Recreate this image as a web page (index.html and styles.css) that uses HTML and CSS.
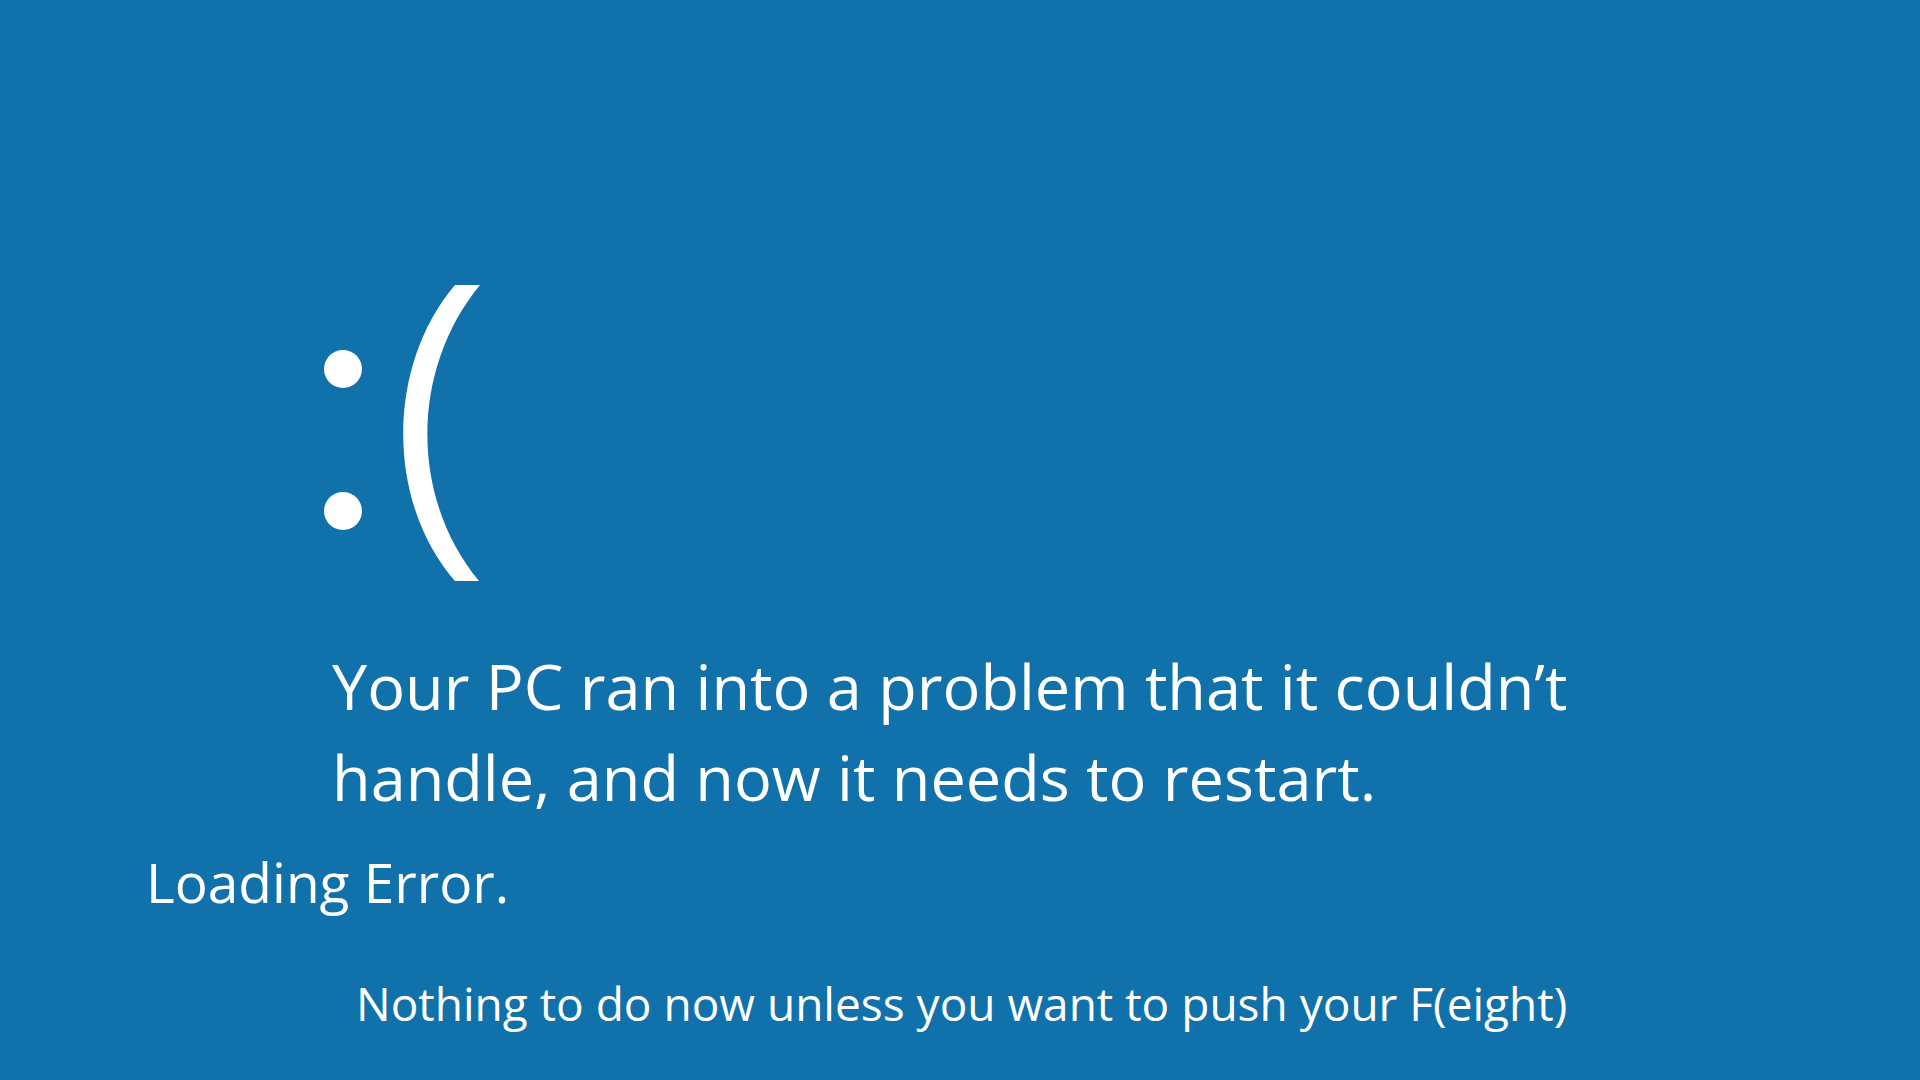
FILE: index.html
```html
<!DOCTYPE html>
<html lang="en">
<head>
<meta charset="utf-8">
<meta name="viewport" content="width=device-width, initial-scale=1">
<title>Loading Error</title>
<link rel="stylesheet" href="styles.css">
</head>
<body>
<main class="screen">
  <div class="face" role="img" aria-label="Sad face">
    <svg class="face-icon" viewBox="0 0 156 296" width="156" height="296">
      <circle cx="19" cy="84" r="19"/>
      <circle cx="19" cy="226" r="19"/>
      <path d="M131 0H156C86 85 86 213 155 296H131C62 217 62 81 131 0Z"/>
    </svg>
  </div>
  <h1 class="message">Your PC ran into a problem that it couldn’t<br>handle, and now it needs to restart.</h1>
  <p class="status">Loading Error.</p>
  <p class="hint">Nothing to do now unless you want to push your F(eight)</p>
</main>
</body>
</html>
```

FILE: styles.css
```css
body {
  margin: 0;
  background: #1171aa;
  color: #fff;
  font-family: "Open Sans", "Noto Sans", sans-serif;
}

.screen {
  display: flex;
  flex-direction: column;
  box-sizing: border-box;
  min-height: 100vh;
  padding: 285px 146px 0;
}

.face {
  padding-left: 178px;
}

.face-icon {
  display: block;
  fill: #fff;
}

.message {
  margin: 59px 0 0;
  padding-left: 186px;
  font-size: 63px;
  line-height: 91px;
  font-weight: 400;
}

.status {
  margin: 22px 0 0;
  font-size: 55px;
  line-height: 76px;
}

.hint {
  margin: 51px 0 0;
  padding-left: 210px;
  font-size: 46px;
  line-height: 64px;
}
```
